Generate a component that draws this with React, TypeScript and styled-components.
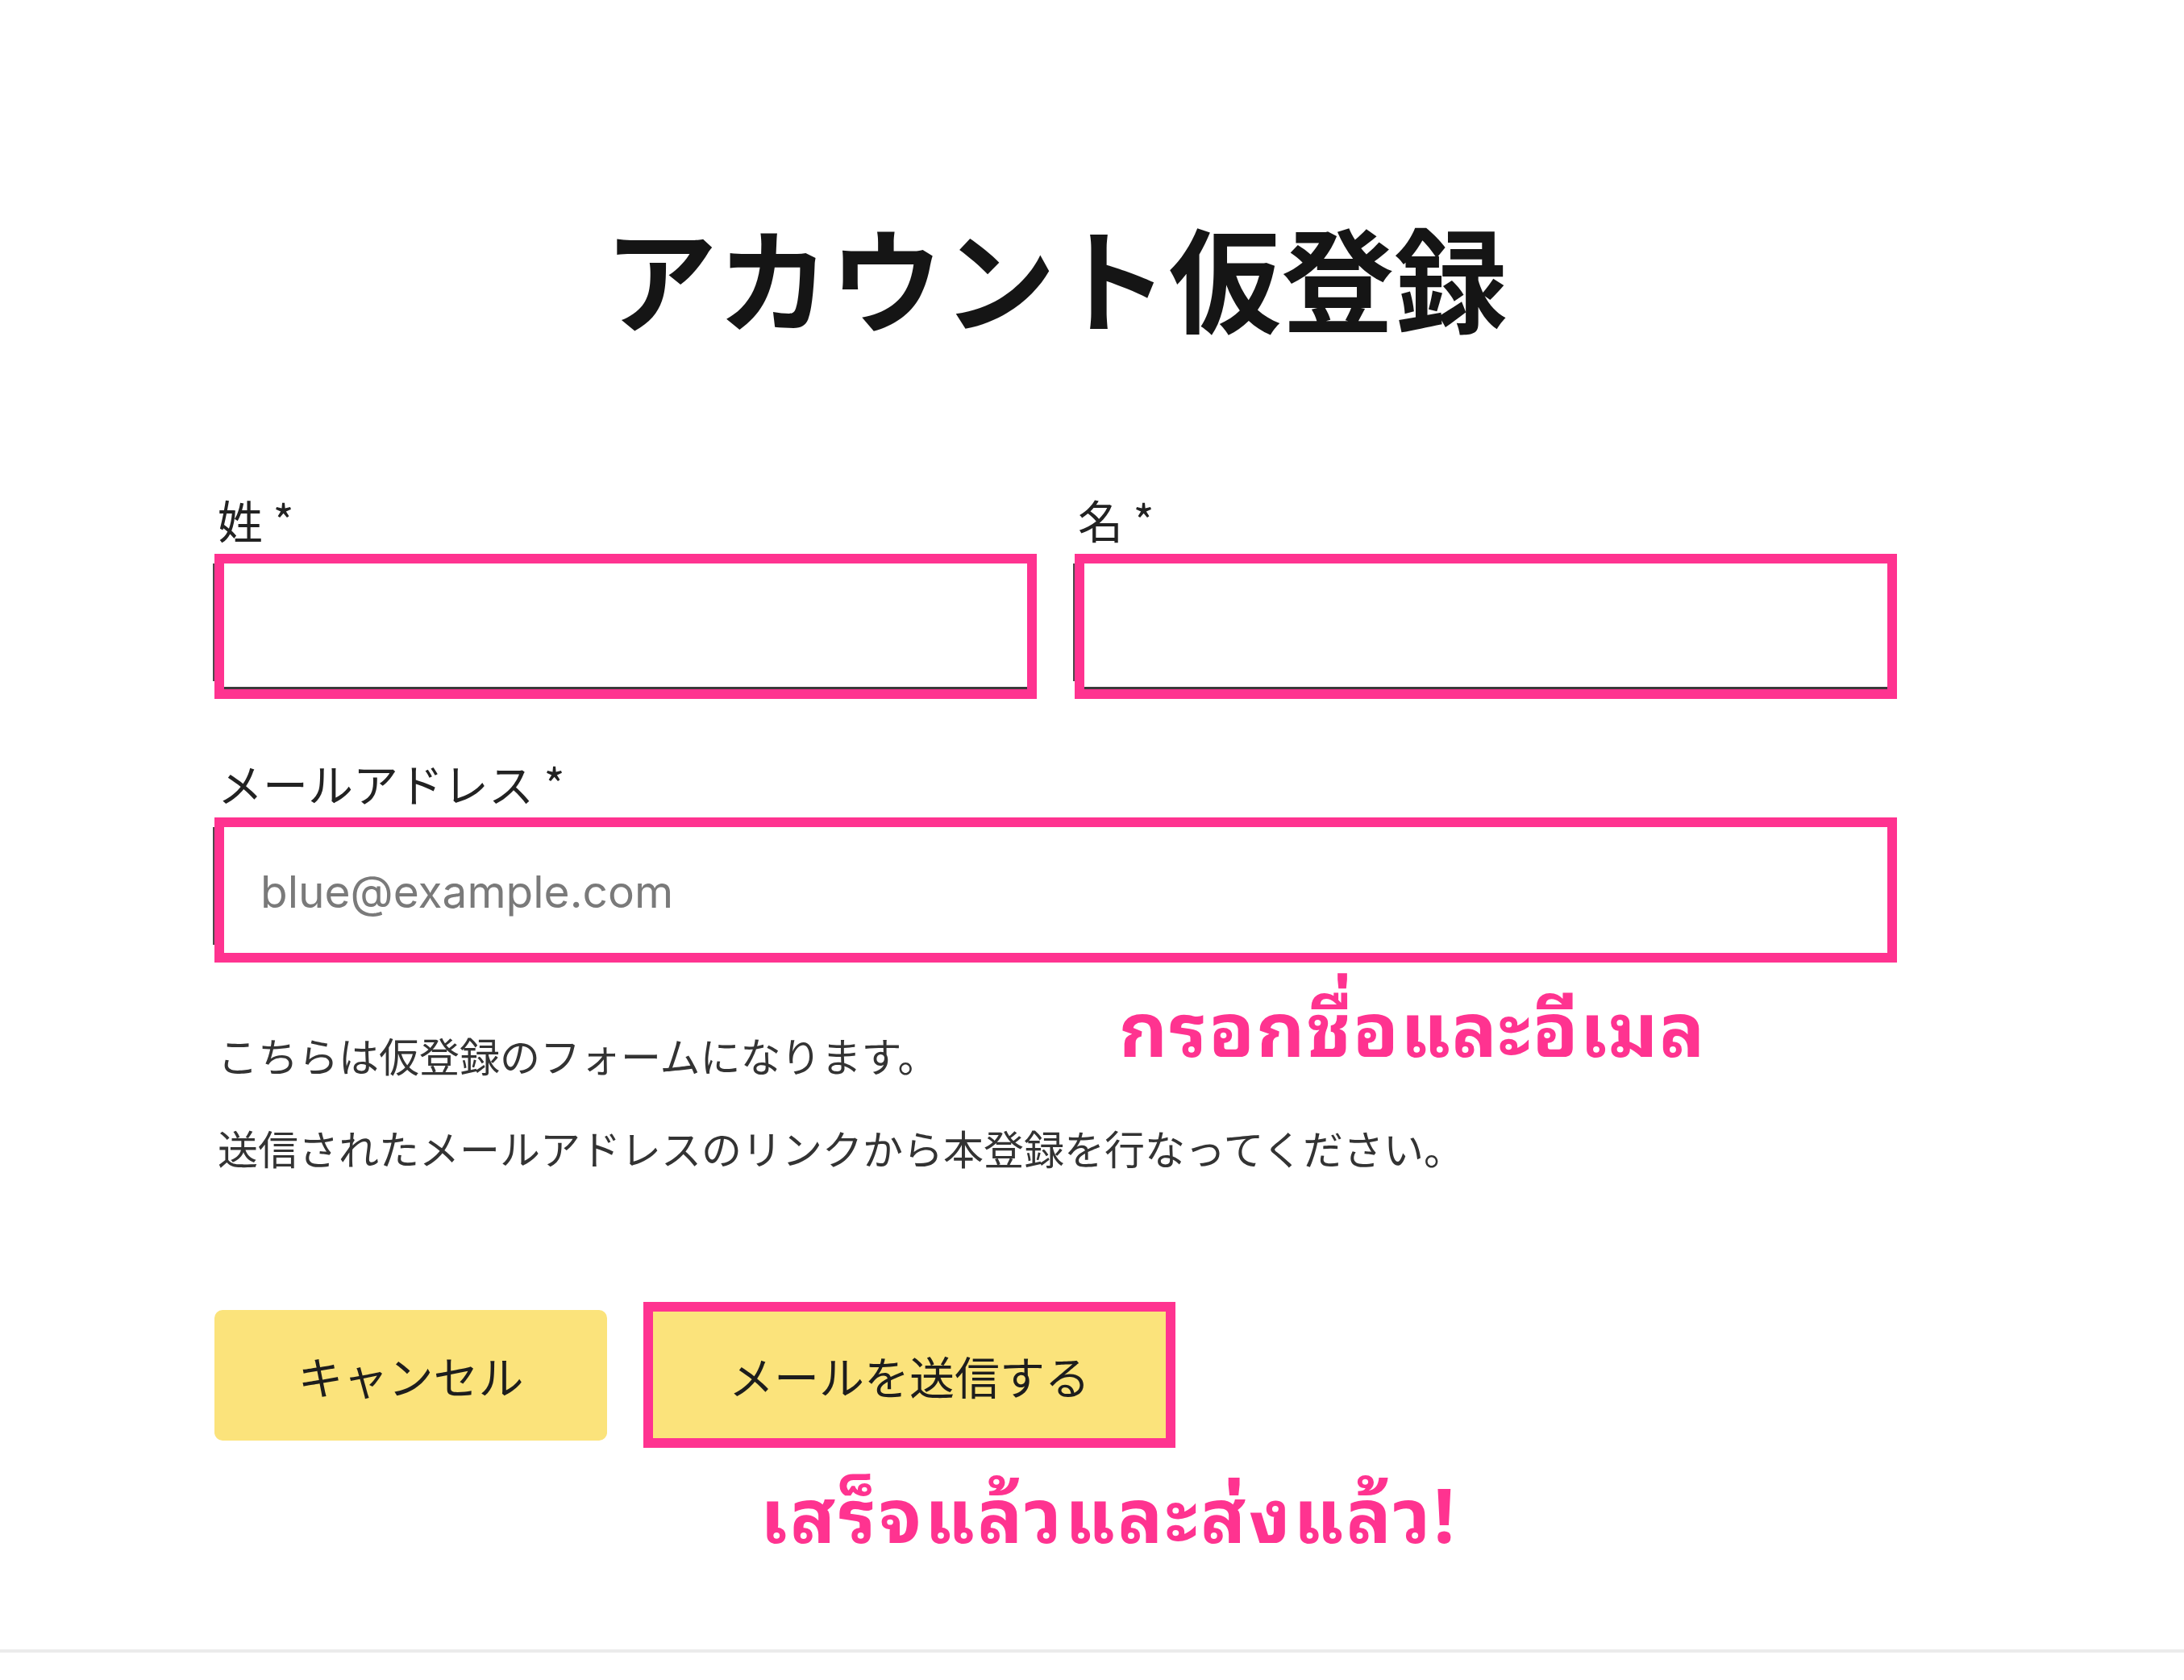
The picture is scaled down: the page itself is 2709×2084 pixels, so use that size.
import React from "react";
import styled, { createGlobalStyle } from "styled-components";

const PINK = "#ff3390";
const YELLOW = "#fbe37b";
const JP = `"Noto Sans CJK JP", "Noto Sans", sans-serif`;
const TH = `"Noto Sans Thai Looped", "Loma", "Garuda", "Noto Sans Thai", "Noto Sans", sans-serif`;

const GlobalStyle = createGlobalStyle`
  html, body {
    margin: 0;
    padding: 0;
    background: #ffffff;
  }
  body {
    font-family: ${JP};
    color: #222;
  }
  * { box-sizing: border-box; }
`;

const Page = styled.div`
  width: 2709px;
  min-height: 2084px;
  display: flex;
  flex-direction: column;
  padding-bottom: 34px;
`;

const Form = styled.form`
  margin-left: 266px;
  width: 2087px;
  display: flex;
  flex-direction: column;
`;

const Title = styled.h1`
  margin: 271px 0 0;
  font-family: ${JP};
  font-size: 140px;
  line-height: 1;
  font-weight: 700;
  color: #151515;
  text-align: center;
  letter-spacing: 0;
`;

const NameRow = styled.div`
  margin-top: 205px;
  display: grid;
  grid-template-columns: 1fr 1fr;
  column-gap: 47px;
`;

const Field = styled.div<{ $gap?: number }>`
  display: flex;
  flex-direction: column;
  margin-top: ${(p) => p.$gap ?? 0}px;
`;

const Label = styled.label`
  font-family: ${JP};
  font-size: 56px;
  line-height: 1;
  font-weight: 400;
  color: #222;
  margin: 0 0 15px 4px;
`;

const Frame = styled.div<{ $underline?: boolean }>`
  position: relative;
  height: 180px;
  border: 12px solid ${PINK};
  background: #fff;
  display: flex;
  &::before {
    content: "";
    position: absolute;
    left: -14px;
    top: 0;
    bottom: 10px;
    width: 2px;
    background: #4a4a4a;
  }
  ${(p) =>
    p.$underline
      ? `&::after {
    content: "";
    position: absolute;
    left: 0;
    right: 0;
    bottom: 0;
    height: 3px;
    background: #3a3a3a;
  }`
      : ""}
`;

const TextInput = styled.input`
  flex: 1;
  width: 100%;
  border: none;
  outline: none;
  background: transparent;
  padding: 4px 0 0 45px;
  font-family: Inter, "Noto Sans", sans-serif;
  font-size: 55px;
  color: #333;
  &::placeholder {
    color: #7a7a7a;
  }
`;

const Notes = styled.div`
  margin-top: 74px;
  display: flex;
  flex-direction: column;
  gap: 35px;
`;

const NoteLine = styled.p`
  position: relative;
  margin: 0 0 0 4px;
  font-family: ${JP};
  font-size: 50px;
  line-height: 80px;
  font-weight: 400;
  color: #333;
`;

const Callout = styled.span`
  position: absolute;
  left: 1118px;
  top: -45px;
  font-family: ${TH};
  font-size: 93px;
  line-height: 1;
  font-weight: 700;
  letter-spacing: 2px;
  color: ${PINK};
  white-space: nowrap;
`;

const Actions = styled.div`
  margin-top: 152px;
  display: flex;
  align-items: center;
  gap: 45px;
`;

const CancelButton = styled.button`
  width: 487px;
  height: 162px;
  border: none;
  border-radius: 10px;
  background: ${YELLOW};
  font-family: ${JP};
  font-size: 56px;
  font-weight: 400;
  color: #1d1d1d;
  cursor: pointer;
`;

const SubmitFrame = styled.div`
  width: 660px;
  height: 181px;
  border: 12px solid ${PINK};
  display: flex;
`;

const SubmitButton = styled.button`
  flex: 1;
  border: none;
  background: ${YELLOW};
  font-family: ${JP};
  font-size: 56px;
  font-weight: 400;
  color: #1d1d1d;
  cursor: pointer;
`;

const DoneCallout = styled.div`
  margin: 30px 0 0 677px;
  font-family: ${TH};
  font-size: 93px;
  line-height: 1;
  font-weight: 700;
  letter-spacing: 3.6px;
  color: ${PINK};
  white-space: nowrap;
`;

const Divider = styled.hr`
  margin: auto 0 0;
  border: none;
  height: 4px;
  width: 100%;
  background: #ebebeb;
`;

export default function App() {
  return (
    <>
      <GlobalStyle />
      <Page>
        <Form onSubmit={(e) => e.preventDefault()}>
          <Title>アカウント仮登録</Title>
          <NameRow>
            <Field>
              <Label>姓 *</Label>
              <Frame $underline>
                <TextInput type="text" />
              </Frame>
            </Field>
            <Field>
              <Label>名 *</Label>
              <Frame $underline>
                <TextInput type="text" />
              </Frame>
            </Field>
          </NameRow>
          <Field $gap={76}>
            <Label>メールアドレス *</Label>
            <Frame>
              <TextInput type="email" placeholder="blue@example.com" />
            </Frame>
          </Field>
          <Notes>
            <NoteLine>
              こちらは仮登録のフォームになります。
              <Callout>กรอกชื่อและอีเมล</Callout>
            </NoteLine>
            <NoteLine>送信されたメールアドレスのリンクから本登録を行なってください。</NoteLine>
          </Notes>
          <Actions>
            <CancelButton type="button">キャンセル</CancelButton>
            <SubmitFrame>
              <SubmitButton type="submit">メールを送信する</SubmitButton>
            </SubmitFrame>
          </Actions>
          <DoneCallout>เสร็จแล้วและส่งแล้ว!</DoneCallout>
        </Form>
        <Divider />
      </Page>
    </>
  );
}
